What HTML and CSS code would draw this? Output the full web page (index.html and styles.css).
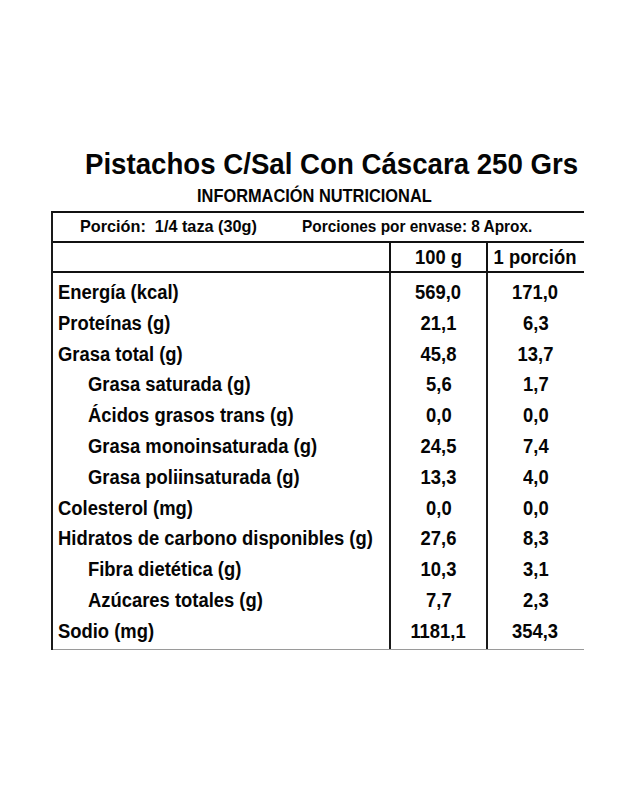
FILE: index.html
```html
<!DOCTYPE html>
<html lang="es">
<head>
<meta charset="utf-8">
<title>Pistachos C/Sal Con Cáscara 250 Grs</title>
<link rel="stylesheet" href="styles.css">
</head>
<body>
<div class="label">
  <h1 class="title"><span class="t">Pistachos C/Sal Con Cáscara 250 Grs</span></h1>
  <h2 class="subtitle"><span class="t">INFORMACIÓN NUTRICIONAL</span></h2>
  <div class="table">
    <div class="portion">
      <span class="portion-size"><span class="t">Porción:&nbsp; 1/4 taza (30g)</span></span>
      <span class="portion-count"><span class="t">Porciones por envase: 8 Aprox.</span></span>
    </div>
    <div class="head">
      <div class="cell name"></div>
      <div class="cell val"><span class="t c">100 g</span></div>
      <div class="cell val"><span class="t c">1 porción</span></div>
    </div>
    <div class="body">
      <div class="col names">
        <div class="row"><span class="t">Energía (kcal)</span></div>
        <div class="row"><span class="t">Proteínas (g)</span></div>
        <div class="row"><span class="t">Grasa total (g)</span></div>
        <div class="row sub"><span class="t">Grasa saturada (g)</span></div>
        <div class="row sub"><span class="t">Ácidos grasos trans (g)</span></div>
        <div class="row sub"><span class="t">Grasa monoinsaturada (g)</span></div>
        <div class="row sub"><span class="t">Grasa poliinsaturada (g)</span></div>
        <div class="row"><span class="t">Colesterol (mg)</span></div>
        <div class="row"><span class="t">Hidratos de carbono disponibles (g)</span></div>
        <div class="row sub"><span class="t">Fibra dietética (g)</span></div>
        <div class="row sub"><span class="t">Azúcares totales (g)</span></div>
        <div class="row"><span class="t">Sodio (mg)</span></div>
      </div>
      <div class="col nums">
        <div class="row"><span class="t c">569,0</span></div>
        <div class="row"><span class="t c">21,1</span></div>
        <div class="row"><span class="t c">45,8</span></div>
        <div class="row"><span class="t c">5,6</span></div>
        <div class="row"><span class="t c">0,0</span></div>
        <div class="row"><span class="t c">24,5</span></div>
        <div class="row"><span class="t c">13,3</span></div>
        <div class="row"><span class="t c">0,0</span></div>
        <div class="row"><span class="t c">27,6</span></div>
        <div class="row"><span class="t c">10,3</span></div>
        <div class="row"><span class="t c">7,7</span></div>
        <div class="row"><span class="t c">1181,1</span></div>
      </div>
      <div class="col nums">
        <div class="row"><span class="t c">171,0</span></div>
        <div class="row"><span class="t c">6,3</span></div>
        <div class="row"><span class="t c">13,7</span></div>
        <div class="row"><span class="t c">1,7</span></div>
        <div class="row"><span class="t c">0,0</span></div>
        <div class="row"><span class="t c">7,4</span></div>
        <div class="row"><span class="t c">4,0</span></div>
        <div class="row"><span class="t c">0,0</span></div>
        <div class="row"><span class="t c">8,3</span></div>
        <div class="row"><span class="t c">3,1</span></div>
        <div class="row"><span class="t c">2,3</span></div>
        <div class="row"><span class="t c">354,3</span></div>
      </div>
    </div>
  </div>
</div>
</body>
</html>
```
FILE: styles.css
```css
html, body {
  margin: 0;
  padding: 0;
  background: #ffffff;
}
body {
  font-family: "Liberation Sans", Arial, sans-serif;
  font-weight: bold;
  color: #050505;
}
.t {
  display: inline-block;
  white-space: nowrap;
  transform: scaleX(0.92);
  transform-origin: left center;
}
.t.c {
  transform-origin: center center;
}
.label {
  width: 532px;
  margin-left: 52px;
  padding-top: 148px;
}
.title {
  margin: 0;
  padding-left: 33px;
  font-size: 29px;
  line-height: 32px;
  font-weight: bold;
  white-space: nowrap;
}
.title .t {
  transform: scaleX(0.953);
}
.subtitle {
  margin: 6px 0 0 0;
  padding-left: 145px;
  font-size: 18px;
  line-height: 20px;
  font-weight: bold;
  white-space: nowrap;
}
.subtitle .t {
  transform: scaleX(0.91);
}
.table {
  margin-top: 5px;
  margin-left: -1px;
  border-top: 2px solid #111;
  border-left: 2px solid #1a1a1a;
}
.portion {
  height: 28px;
  display: flex;
  align-items: center;
  font-size: 17px;
  border-bottom: 2px solid #111;
}
.portion-size {
  flex: 0 0 222px;
  margin-left: 27px;
}
.portion-size .t {
  transform: scaleX(0.955);
}
.portion-count .t {
  transform: scaleX(0.905);
}
.head {
  display: grid;
  grid-template-columns: 336px 97px 97px;
  height: 28px;
  border-bottom: 2px solid #111;
  font-size: 20px;
}
.cell {
  display: flex;
  align-items: center;
  justify-content: center;
}
.head .val {
  border-left: 2px solid #111;
}
.body {
  display: grid;
  grid-template-columns: 336px 97px 97px;
  border-bottom: 1px solid #9a9a9a;
}
.col {
  padding: 4px 0 2px 0;
}
.nums {
  border-left: 2px solid #1a1a1a;
  text-align: center;
}
.row {
  height: 30.8px;
  line-height: 30.8px;
  font-size: 20px;
  white-space: nowrap;
}
.names .row {
  padding-left: 5px;
}
.names .row.sub {
  padding-left: 35px;
}
```
